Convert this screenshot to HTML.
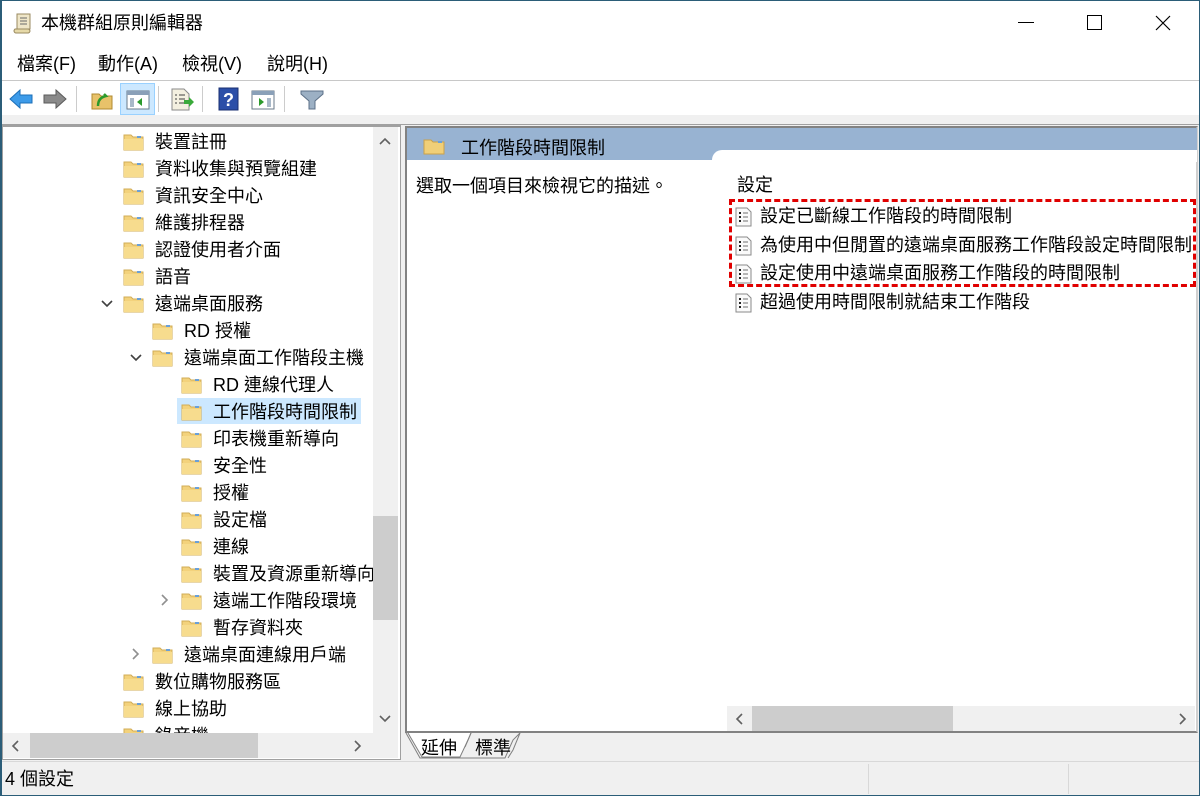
<!DOCTYPE html>
<html><head><meta charset="utf-8">
<style>
*{margin:0;padding:0;box-sizing:border-box}
body{width:1200px;height:796px;position:relative;overflow:hidden;background:#f0f0f0;font-family:"Liberation Sans","Noto Sans CJK TC",sans-serif;color:#000}
.abs{position:absolute}
.t{font-size:18px;line-height:20px;white-space:nowrap}
.row{position:absolute;height:27px;left:0;width:371px}
.row .f{position:absolute;top:5px}
.row .tx{position:absolute;top:4px;font-size:18px;line-height:20px;white-space:nowrap}
.chev{position:absolute;top:8px}
.item{position:absolute;left:735px;height:24px}
.item svg{position:absolute;left:0;top:3px}
.item span{position:absolute;left:25px;top:2px;font-size:18px;line-height:20px;white-space:nowrap}
</style></head><body>
<div class="abs" style="left:0;top:0;width:1200px;height:796px;border:1px solid #2b5d78;border-left-width:2px;z-index:50;pointer-events:none"></div>
<div class="abs" style="left:0;top:0;width:1200px;height:81px;background:#fff"></div>
<svg class="abs" style="left:13px;top:12px" width="20" height="22" viewBox="0 0 20 22"><path d="M4 2h13v15H4z" fill="#efe6c8" stroke="#9a8a60"/><path d="M2 17h13c1 0 2 1 2 2s-1 2-2 2H3c-1 0-2-1-2-2s1-2 1-2z" fill="#e6d9a8" stroke="#9a8a60"/><path d="M7 6h7M7 9h7M7 12h7" stroke="#6a6a6a"/></svg>
<div class="abs t" style="left:41px;top:13px">本機群組原則編輯器</div>
<div class="abs" style="left:1018px;top:22px;width:16px;height:1px;background:#000"></div>
<div class="abs" style="left:1087px;top:15px;width:15px;height:15px;border:1px solid #000"></div>
<svg class="abs" style="left:1155px;top:15px" width="16" height="16"><path d="M1 1L15 15M15 1L1 15" stroke="#000" stroke-width="1.2"/></svg>
<div class="abs t" style="left:17px;top:54px">檔案(F)</div>
<div class="abs t" style="left:98px;top:54px">動作(A)</div>
<div class="abs t" style="left:182px;top:54px">檢視(V)</div>
<div class="abs t" style="left:267px;top:54px">說明(H)</div>
<div class="abs" style="left:0;top:80px;width:1200px;height:1px;background:#c8c8c8"></div>
<div class="abs" style="left:0;top:81px;width:1200px;height:34px;background:#fff"></div>
<svg class="abs" style="left:8px;top:88px" width="26" height="22"><path d="M2 11L12 2v5h12v8H12v5z" fill="#3d9be9" stroke="#1c6fb8"/></svg>
<svg class="abs" style="left:42px;top:88px" width="26" height="22"><path d="M24 11L14 2v5H2v8h12v5z" fill="#8a8a8a" stroke="#5a5a5a"/></svg>
<div class="abs" style="left:76px;top:86px;width:1px;height:26px;background:#ccc"></div>
<svg class="abs" style="left:90px;top:88px" width="24" height="22"><path d="M2 6h7l2 2h11v13H2z" fill="#e8c26a" stroke="#b08a30"/><path d="M8 18c0-6 3-9 8-10l-2-2M16 8l-3 1" stroke="#2c9a2c" stroke-width="2.5" fill="none"/></svg>
<div class="abs" style="left:120px;top:83px;width:35px;height:32px;background:#cce8ff;border:1px solid #99d1ff"></div>
<svg class="abs" style="left:126px;top:89px" width="24" height="22"><rect x="1" y="2" width="22" height="18" fill="#fff" stroke="#6a7a8a"/><rect x="1" y="2" width="22" height="4" fill="#8aa0b8"/><path d="M4 9h4v9H4z" fill="#a8b8c8"/><path d="M16 9l-5 4 5 4z" fill="#2c9a2c"/></svg>
<div class="abs" style="left:158px;top:86px;width:1px;height:26px;background:#ccc"></div>
<svg class="abs" style="left:170px;top:88px" width="26" height="24"><path d="M2 1h12l5 5v16H2z" fill="#f4f0e0" stroke="#8a8a8a"/><path d="M5 7h2M9 7h6M5 11h2M9 11h6M5 15h2M9 15h5" stroke="#404040"/><path d="M14 12h5v-3l5 5-5 5v-3h-5z" fill="#3aaa3a"/></svg>
<div class="abs" style="left:202px;top:86px;width:1px;height:26px;background:#ccc"></div>
<svg class="abs" style="left:218px;top:87px" width="22" height="24"><rect x="1" y="1" width="19" height="22" fill="#2c4fa8" stroke="#1a2f70"/><text x="5" y="19" font-size="18" font-weight="bold" fill="#fff" font-family="Liberation Sans">?</text></svg>
<svg class="abs" style="left:251px;top:89px" width="24" height="22"><rect x="1" y="2" width="22" height="18" fill="#fff" stroke="#6a7a8a"/><rect x="1" y="2" width="22" height="4" fill="#8aa0b8"/><path d="M16 9h4v9h-4z" fill="#a8b8c8"/><path d="M8 9l5 4-5 4z" fill="#2c9a2c"/></svg>
<div class="abs" style="left:284px;top:86px;width:1px;height:26px;background:#ccc"></div>
<svg class="abs" style="left:300px;top:89px" width="24" height="22"><path d="M1 2h22v3l-8 7v8h-6v-8L1 5z" fill="#9cb0c4" stroke="#5c7088"/></svg>
<div class="abs" style="left:0;top:124px;width:1200px;height:1px;background:#a0a0a0"></div>

<div class="abs" style="left:2px;top:125px;width:399px;height:635px;background:#fff;border:1px solid #a0a0a0;border-top:2px solid #a0a0a0"></div>
<div class="abs" style="left:373px;top:127px;width:25px;height:606px;background:#f0f0f0"></div>
<div class="abs" style="left:373px;top:516px;width:25px;height:104px;background:#cdcdcd"></div>
<svg class="abs" style="left:379px;top:137px" width="12" height="8"><path d="M1 7l5-5 5 5" stroke="#606060" stroke-width="1.6" fill="none"/></svg>
<svg class="abs" style="left:379px;top:715px" width="12" height="8"><path d="M1 1l5 5 5-5" stroke="#606060" stroke-width="1.6" fill="none"/></svg>
<div class="abs" style="left:3px;top:733px;width:395px;height:25px;background:#f0f0f0"></div>
<div class="abs" style="left:30px;top:733px;width:228px;height:25px;background:#cdcdcd"></div>
<svg class="abs" style="left:11px;top:740px" width="8" height="12"><path d="M7 1L2 6l5 5" stroke="#606060" stroke-width="1.6" fill="none"/></svg>
<svg class="abs" style="left:354px;top:740px" width="8" height="12"><path d="M1 1l5 5-5 5" stroke="#606060" stroke-width="1.6" fill="none"/></svg>

<div class="abs" id="tree" style="left:0;top:127px;width:373px;height:606px;overflow:hidden">
<div class="abs" style="left:177px;top:271px;width:184px;height:26px;background:#cce8ff"></div>
</div>

<div class="abs" style="left:405px;top:126px;width:793px;height:607px;background:#fff;border:2px solid #828282;border-right-color:#d0d0d0"></div>
<div class="abs" style="left:407px;top:128px;width:790px;height:32px;background:#98b3d2"></div>
<div class="abs" style="left:712px;top:150px;width:485px;height:12px;background:#fff;border-top-left-radius:10px"></div>
<svg class="abs" style="left:423px;top:137px" width="22" height="18"><path d="M1 3h7l2 2h11v12H1z" fill="#f0cf78" stroke="#caa24a"/><rect x="15" y="4" width="4" height="2" fill="#6aa0d8"/></svg>
<div class="abs t" style="left:461px;top:138px">工作階段時間限制</div>
<div class="abs t" style="left:416px;top:176px">選取一個項目來檢視它的描述。</div>
<div class="abs t" style="left:737px;top:175px">設定</div>
<div class="abs" style="left:729px;top:199px;width:467px;height:88px;border:3px dashed #e00000"></div>
<div id="items"></div>
<div class="abs" style="left:727px;top:706px;width:468px;height:25px;background:#f0f0f0"></div>
<div class="abs" style="left:752px;top:706px;width:201px;height:25px;background:#cdcdcd"></div>
<svg class="abs" style="left:735px;top:713px" width="8" height="12"><path d="M7 1L2 6l5 5" stroke="#606060" stroke-width="1.6" fill="none"/></svg>
<svg class="abs" style="left:1179px;top:713px" width="8" height="12"><path d="M1 1l5 5-5 5" stroke="#606060" stroke-width="1.6" fill="none"/></svg>
<svg class="abs" style="left:405px;top:732px" width="130" height="28"><path d="M1 1L15 26H100L108 8 115 1" fill="none" stroke="#808080"/><path d="M3 1L17 25H55L63 8 66 1" fill="#fff" stroke="#808080"/><path d="M66 1L60 15" stroke="#808080"/><path d="M115 1L108 18 103 26" stroke="#808080" fill="none"/></svg>
<div class="abs t" style="left:421px;top:738px">延伸</div>
<div class="abs t" style="left:475px;top:738px">標準</div>
<div class="abs" style="left:0;top:761px;width:1200px;height:1px;background:#d8d8d8"></div>
<div class="abs" style="left:868px;top:764px;width:1px;height:30px;background:#d8d8d8"></div>
<div class="abs" style="left:1068px;top:764px;width:1px;height:30px;background:#d8d8d8"></div>
<div class="abs t" style="left:5px;top:769px">4 個設定</div>

<script>
var F='<svg class="f" width="21" height="18" viewBox="0 0 21 18"><path d="M1 2h7l2 2h10v13H1z" fill="#f3d27c" stroke="#d2ac56"/><path d="M1 6h19v11H1z" fill="#f7dc8e"/><rect x="14" y="3" width="4" height="2" fill="#6aa0d8"/></svg>';
var rows=[["裝置註冊",0],["資料收集與預覽組建",0],["資訊安全中心",0],["維護排程器",0],["認證使用者介面",0],["語音",0],["遠端桌面服務",0,"d"],["RD 授權",1],["遠端桌面工作階段主機",1,"d"],["RD 連線代理人",2],["工作階段時間限制",2],["印表機重新導向",2],["安全性",2],["授權",2],["設定檔",2],["連線",2],["裝置及資源重新導向",2],["遠端工作階段環境",2,"r"],["暫存資料夾",2],["遠端桌面連線用戶端",1,"r"],["數位購物服務區",0],["線上協助",0],["錄音機",0]];
var h='';
rows.forEach(function(r,i){var fx=123+29*r[1],tx=155+29*r[1],y=1+27*i;
h+='<div class="row" style="top:'+y+'px">';
if(r[2]=="d")h+='<svg class="chev" style="left:'+(fx-22)+'px;top:10px" width="12" height="8"><path d="M1 1l5 5 5-5" stroke="#404040" stroke-width="1.6" fill="none"/></svg>';
if(r[2]=="r")h+='<svg class="chev" style="left:'+(fx-20)+'px;top:7px" width="8" height="12"><path d="M1 1l5 5-5 5" stroke="#909090" stroke-width="1.6" fill="none"/></svg>';
h+='<span style="position:absolute;left:'+fx+'px;top:0">'+F+'</span><span class="tx" style="left:'+tx+'px">'+r[0]+'</span></div>';});
document.getElementById('tree').innerHTML+=h;
var D='<svg width="18" height="20" viewBox="0 0 18 20"><path d="M1 1h11l4 4v14H1z" fill="#fafafa" stroke="#8a8a8a"/><path d="M4 6h2M4 10h2M4 14h2" stroke="#222" stroke-width="2"/><path d="M8 6h5M8 10h5M8 14h5" stroke="#707070"/></svg>';
var it=["設定已斷線工作階段的時間限制","為使用中但閒置的遠端桌面服務工作階段設定時間限制","設定使用中遠端桌面服務工作階段的時間限制","超過使用時間限制就結束工作階段"];
var s='';it.forEach(function(t,i){s+='<div class="item" style="top:'+(204+28.5*i)+'px">'+D+'<span>'+t+'</span></div>';});
document.getElementById('items').innerHTML=s;
</script>
</body></html>
